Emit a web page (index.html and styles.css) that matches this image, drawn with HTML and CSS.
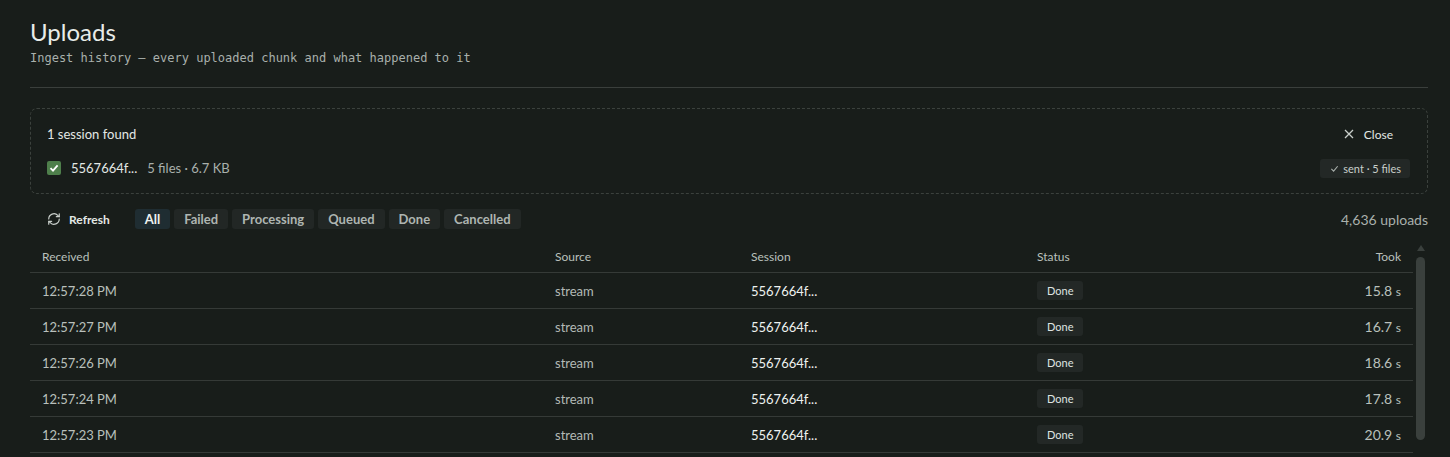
FILE: index.html
```html
<!DOCTYPE html>
<html lang="en">
<head>
    <meta charset="UTF-8">
    <meta name="viewport" content="width=device-width, initial-scale=1.0">
    <title>Uploads</title>
    <link rel="stylesheet" href="styles.css">
</head>
<body>
    <div class="page">
        <header class="page-head">
            <h1>Uploads</h1>
            <p class="subtitle">Ingest history — every uploaded chunk and what happened to it</p>
        </header>

        <section class="session-box">
            <div class="session-top">
                <span class="found">1 session found</span>
                <button class="close-btn">
                    <svg width="10" height="10" viewBox="0 0 10 10"><path d="M1 1L9 9M9 1L1 9" stroke="#c9cfcb" stroke-width="1.3"/></svg>
                    Close
                </button>
            </div>
            <div class="session-row">
                <span class="check">
                    <svg width="10" height="10" viewBox="0 0 10 10"><path d="M1.5 5.2L4 7.6L8.6 2.4" stroke="#fff" stroke-width="1.8" fill="none"/></svg>
                </span>
                <span class="sess-id">5567664f...</span>
                <span class="sess-meta">5 files · 6.7 KB</span>
                <span class="sent-chip">
                    <svg width="9" height="9" viewBox="0 0 10 10"><path d="M1.5 5.5L4 8L8.5 2.5" stroke="#a9b0ac" stroke-width="1.2" fill="none"/></svg>
                    sent · 5 files
                </span>
            </div>
        </section>

        <div class="toolbar">
            <button class="refresh">
                <svg width="14" height="14" viewBox="0 0 24 24" fill="none" stroke="#c9cfcb" stroke-width="2" stroke-linecap="round" stroke-linejoin="round"><path d="M21 12a9 9 0 0 1-15.5 6.2L3 16"/><path d="M3 12a9 9 0 0 1 15.5-6.2L21 8"/><path d="M21 3v5h-5"/><path d="M3 21v-5h5"/></svg>
                Refresh
            </button>
            <div class="filters">
                <button class="filter active">All</button>
                <button class="filter">Failed</button>
                <button class="filter">Processing</button>
                <button class="filter">Queued</button>
                <button class="filter">Done</button>
                <button class="filter">Cancelled</button>
            </div>
            <span class="count">4,636 uploads</span>
        </div>

        <div class="table-wrap">
            <table class="uploads">
                <thead>
                    <tr>
                        <th class="col-recv">Received</th>
                        <th class="col-src">Source</th>
                        <th class="col-sess">Session</th>
                        <th class="col-status">Status</th>
                        <th class="col-took">Took</th>
                    </tr>
                </thead>
                <tbody>
                    <tr><td>12:57:28 PM</td><td class="muted">stream</td><td class="bright">5567664f...</td><td><span class="badge">Done</span></td><td class="took">15.8 <span class="unit">s</span></td></tr>
                    <tr><td>12:57:27 PM</td><td class="muted">stream</td><td class="bright">5567664f...</td><td><span class="badge">Done</span></td><td class="took">16.7 <span class="unit">s</span></td></tr>
                    <tr><td>12:57:26 PM</td><td class="muted">stream</td><td class="bright">5567664f...</td><td><span class="badge">Done</span></td><td class="took">18.6 <span class="unit">s</span></td></tr>
                    <tr><td>12:57:24 PM</td><td class="muted">stream</td><td class="bright">5567664f...</td><td><span class="badge">Done</span></td><td class="took">17.8 <span class="unit">s</span></td></tr>
                    <tr><td>12:57:23 PM</td><td class="muted">stream</td><td class="bright">5567664f...</td><td><span class="badge">Done</span></td><td class="took">20.9 <span class="unit">s</span></td></tr>
                </tbody>
            </table>
            <div class="scrollbar">
                <span class="scroll-up"></span>
                <span class="scroll-thumb"></span>
            </div>
        </div>
    </div>
</body>
</html>
```

FILE: styles.css
```css
html, body {
    margin: 0;
    padding: 0;
    background-color: #181d1a;
    overflow: hidden;
}
body {
    font-family: Lato, "Noto Sans", sans-serif;
    color: #dfe4e1;
}
.page {
    padding: 18px 22px 0 30px;
}
h1 {
    margin: 0;
    font-size: 24px;
    font-weight: 400;
    color: #e8ece9;
    line-height: 28px;
}
.subtitle {
    margin: 4px 0 0;
    font-family: "DejaVu Sans Mono", monospace;
    font-size: 12px;
    color: #a9b0ac;
    line-height: 16px;
}
.page-head {
    padding-bottom: 21px;
    border-bottom: 1px solid #3a3f3c;
    margin-bottom: 20px;
}
button {
    font-family: inherit;
    border: none;
    background: none;
    cursor: pointer;
}

/* session panel */
.session-box {
    border: 1px dashed #3b413d;
    border-radius: 7px;
    padding: 14px 16px 15px 16px;
}
.session-top {
    display: flex;
    justify-content: space-between;
    align-items: center;
    height: 22px;
}
.found {
    font-size: 13px;
    color: #e3e8e5;
}
.close-btn {
    display: flex;
    align-items: center;
    gap: 10px;
    color: #e3e8e5;
    font-size: 12px;
    padding: 0 18px 0 0;
}
.session-row {
    display: flex;
    align-items: center;
    margin-top: 13px;
    height: 20px;
    font-size: 13px;
}
.check {
    width: 14px;
    height: 14px;
    background-color: #4e7f4b;
    border-radius: 2px;
    display: flex;
    align-items: center;
    justify-content: center;
    margin-right: 10px;
}
.sess-id {
    color: #e3e8e5;
    margin-right: 10px;
}
.sess-meta {
    color: #a9b0ac;
}
.sent-chip {
    margin-left: auto;
    margin-right: 1px;
    display: flex;
    align-items: center;
    gap: 4px;
    background-color: #232826;
    border-radius: 3px;
    padding: 0 9px 0 10px;
    height: 19px;
    font-size: 11px;
    color: #c9cfcb;
}

/* toolbar */
.toolbar {
    display: flex;
    align-items: center;
    margin-top: 14px;
    height: 22px;
    padding-left: 17px;
}
.refresh {
    display: flex;
    align-items: center;
    gap: 8px;
    color: #e3e8e5;
    font-size: 12px;
    font-weight: 700;
    padding: 0;
    margin-right: 25px;
}
.filters {
    display: flex;
    gap: 4px;
}
.filter {
    background-color: #222725;
    color: #aeb5b1;
    font-size: 13px;
    font-weight: 700;
    height: 20px;
    padding: 0 10px;
    border-radius: 3px;
}
.filter.active {
    background-color: #1f2d32;
    color: #eef2f0;
}
.count {
    margin-left: auto;
    font-size: 14px;
    color: #a9b0ac;
}

/* table */
.table-wrap {
    margin-top: 9px;
    display: flex;
}
.uploads {
    flex: 1;
    border-collapse: collapse;
    table-layout: fixed;
}
.uploads th {
    text-align: left;
    font-size: 12px;
    font-weight: 400;
    color: #b9c0bc;
    height: 32px;
    padding: 1px 12px 0;
    border-bottom: 1px solid #353a37;
}
.uploads td {
    height: 35px;
    padding: 0 12px;
    font-size: 13px;
    color: #b9c0bc;
    border-bottom: 1px solid #353a37;
}
.col-recv { width: 489px; }
.col-src { width: 172px; }
.col-sess { width: 262px; }
.col-status { width: auto; }
.col-took { width: 120px; text-align: right !important; }
.uploads td.muted { color: #b3bab6; }
.uploads td.bright { color: #eef2f0; }
.uploads td.took {
    text-align: right;
    font-size: 14px;
}
.unit {
    font-size: 12px;
}
.badge {
    display: inline-block;
    background-color: #232826;
    color: #dfe4e1;
    font-size: 11px;
    padding: 0 10px;
    line-height: 19px;
    border-radius: 3px;
}

/* scrollbar column */
.scrollbar {
    width: 15px;
    display: flex;
    flex-direction: column;
    align-items: center;
    padding-top: 6px;
}
.scroll-up {
    width: 0;
    height: 0;
    border-left: 4px solid transparent;
    border-right: 4px solid transparent;
    border-bottom: 6px solid #3a403d;
}
.scroll-thumb {
    margin-top: 6px;
    width: 9px;
    height: 183px;
    background-color: #3a403d;
    border-radius: 5px;
}
```
